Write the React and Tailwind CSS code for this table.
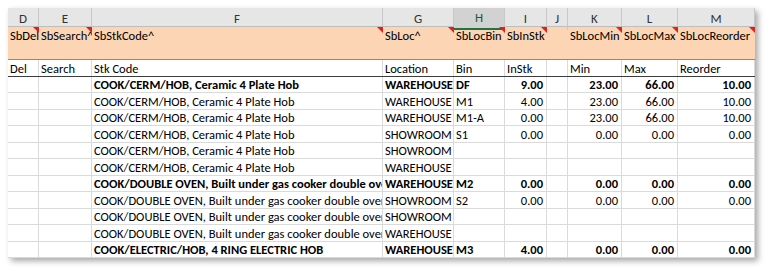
import React from 'react'

const grid = 'grid grid-cols-[31px_53px_291px_71px_51px_42px_21px_54px_56px_77px]'

const cols = [
  { letter: 'D', sb: 'SbDel', label: 'Del', note: true },
  { letter: 'E', sb: 'SbSearch^', label: 'Search', note: true },
  { letter: 'F', sb: 'SbStkCode^', label: 'Stk Code', note: true },
  { letter: 'G', sb: 'SbLoc^', label: 'Location', note: true },
  { letter: 'H', sb: 'SbLocBin', label: 'Bin', note: true, selected: true },
  { letter: 'I', sb: 'SbInStk', label: 'InStk', note: true },
  { letter: 'J', sb: '', label: '', note: false },
  { letter: 'K', sb: 'SbLocMin', label: 'Min', note: true },
  { letter: 'L', sb: 'SbLocMax', label: 'Max', note: true },
  { letter: 'M', sb: 'SbLocReorder', label: 'Reorder', note: true },
]

const hob = 'COOK/CERM/HOB, Ceramic 4 Plate Hob'
const oven = 'COOK/DOUBLE OVEN, Built under gas cooker double oven'

// [bold, code, location, bin, inStk, min, max, reorder]
const rows = [
  [true, hob, 'WAREHOUSE', 'DF', '9.00', '23.00', '66.00', '10.00'],
  [false, hob, 'WAREHOUSE', 'M1', '4.00', '23.00', '66.00', '10.00'],
  [false, hob, 'WAREHOUSE', 'M1-A', '0.00', '23.00', '66.00', '10.00'],
  [false, hob, 'SHOWROOM', 'S1', '0.00', '0.00', '0.00', '0.00'],
  [false, hob, 'SHOWROOM', '', '', '', '', ''],
  [false, hob, 'WAREHOUSE', '', '', '', '', ''],
  [true, oven, 'WAREHOUSE', 'M2', '0.00', '0.00', '0.00', '0.00'],
  [false, oven, 'SHOWROOM', 'S2', '0.00', '0.00', '0.00', '0.00'],
  [false, oven, 'SHOWROOM', '', '', '', '', ''],
  [false, oven, 'WAREHOUSE', '', '', '', '', ''],
  [true, 'COOK/ELECTRIC/HOB, 4 RING ELECTRIC HOB', 'WAREHOUSE', 'M3', '4.00', '0.00', '0.00', '0.00'],
]

function Cell({ children, right = false, bold = false }) {
  return (
    <div
      className={`border-r border-b border-[#dadada] overflow-hidden whitespace-nowrap flex items-end pb-[1px] px-[2px] leading-none ${right ? 'justify-end pr-[3px]' : ''} ${bold ? 'font-bold' : ''}`}
    >
      {children}
    </div>
  )
}

export default function App() {
  return (
    <div className="bg-white w-[769px] h-[271px] pt-[8px] pl-[8px] font-['Carlito','Liberation_Sans_Narrow','Lato',sans-serif] text-[12.5px] text-black">
      <div className="w-[747px] bg-white shadow-[3px_3px_6px_rgba(0,0,0,0.35)]">
        {/* column letters */}
        <div className={`${grid} h-[19px] bg-[#e6e6e6] border-b border-[#bdbdbd]`}>
          {cols.map((c) => (
            <div
              key={c.letter}
              className={`flex items-center justify-center text-[13px] border-r border-[#c8c8c8] ${c.selected ? 'bg-[#d2d2d2] border-b-2 border-b-[#217346] text-[#1f5a38]' : 'text-[#333]'}`}
            >
              {c.letter}
            </div>
          ))}
        </div>

        {/* hidden field names */}
        <div className={`${grid} h-[33px] bg-[#fcd5b4] border-b border-[#8a8a8a]`}>
          {cols.map((c) => (
            <div key={c.letter} className="relative overflow-hidden whitespace-nowrap pl-[2px] pt-[3px] leading-none">
              {c.sb}
              {c.note && (
                <span className="absolute top-0 right-0 w-0 h-0 border-t-[6px] border-t-[#e0201b] border-l-[6px] border-l-transparent" />
              )}
            </div>
          ))}
        </div>

        {/* labels */}
        <div className={`${grid} h-[17px] border-b border-[#3c3c3c]`}>
          {cols.map((c) => (
            <div key={c.letter} className="border-r border-[#dadada] overflow-hidden whitespace-nowrap flex items-end pb-[1px] px-[2px] leading-none">
              {c.label}
            </div>
          ))}
        </div>

        {/* data */}
        {rows.map((r, i) => {
          const [bold, code, loc, bin, inStk, min, max, reorder] = r
          return (
            <div key={i} className={`${grid} ${i % 2 === 0 ? 'h-[16px]' : 'h-[17px]'}`}>
              <Cell />
              <Cell />
              <Cell bold={bold}>{code}</Cell>
              <Cell bold={bold}>{loc}</Cell>
              <Cell bold={bold}>{bin}</Cell>
              <Cell right bold={bold}>{inStk}</Cell>
              <Cell />
              <Cell right bold={bold}>{min}</Cell>
              <Cell right bold={bold}>{max}</Cell>
              <Cell right bold={bold}>{reorder}</Cell>
            </div>
          )
        })}
      </div>
    </div>
  )
}
